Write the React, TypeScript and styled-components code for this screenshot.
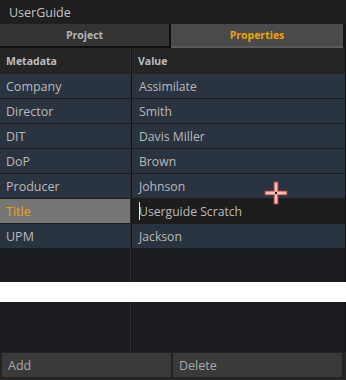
import React from 'react';
import styled, { createGlobalStyle, css } from 'styled-components';

const GlobalStyle = createGlobalStyle`
    html, body {
        margin: 0;
        padding: 0;
        background: #1e1e1e;
    }
    body {
        font-family: 'Open Sans', 'Noto Sans', sans-serif;
        font-size: 12px;
    }
`;

const rows = [
    { key: 'Company', value: 'Assimilate' },
    { key: 'Director', value: 'Smith' },
    { key: 'DIT', value: 'Davis Miller' },
    { key: 'DoP', value: 'Brown' },
    { key: 'Producer', value: 'Johnson' },
    { key: 'Title', value: 'Userguide Scratch', selected: true },
    { key: 'UPM', value: 'Jackson' },
];

const App = (): JSX.Element => {
    return (
        <S_Panel>
            <GlobalStyle />
            <S_TitleBar>UserGuide</S_TitleBar>
            <S_Tabs>
                <S_Tab>Project</S_Tab>
                <S_Tab active>Properties</S_Tab>
            </S_Tabs>
            <S_Table>
                <S_HeadCell>Metadata</S_HeadCell>
                <S_Divider />
                <S_HeadCell>Value</S_HeadCell>
                {rows.map((row) => (
                    <React.Fragment key={row.key}>
                        <S_KeyCell selected={row.selected}>{row.key}</S_KeyCell>
                        <S_Divider />
                        <S_ValueCell editing={row.selected}>
                            {row.selected && <S_Caret />}
                            {row.value}
                        </S_ValueCell>
                    </React.Fragment>
                ))}
                <S_Filler h={33} />
                <S_Divider />
                <S_Filler h={33} />
            </S_Table>
            <S_Gap />
            <S_Table>
                <S_Filler h={50} />
                <S_Divider />
                <S_Filler h={50} />
            </S_Table>
            <S_Buttons>
                <S_Button>Add</S_Button>
                <S_Button>Delete</S_Button>
            </S_Buttons>
            <S_Pointer width="24" height="24" viewBox="0 0 24 24">
                <rect x="10" y="1" width="4" height="22" fill="#f29a9a" stroke="#b04040" strokeWidth="0.8" />
                <rect x="1" y="10" width="22" height="4" fill="#f29a9a" stroke="#b04040" strokeWidth="0.8" />
                <rect x="10.4" y="10.4" width="3.2" height="3.2" fill="#f29a9a" />
                <line x1="12" y1="2" x2="12" y2="22" stroke="#fde0e0" strokeWidth="1" />
                <line x1="2" y1="12" x2="22" y2="12" stroke="#fde0e0" strokeWidth="1" />
                <rect x="11" y="11" width="2" height="2" fill="#1a1a1a" />
            </S_Pointer>
        </S_Panel>
    );
};

export default App;

const S_Panel = styled.div`
    position: relative;
    width: 346px;
    height: 380px;
    background: #1e1e1e;
    color: #b9b9b9;
    overflow: hidden;
`;

const S_TitleBar = styled.div`
    height: 24px;
    display: flex;
    align-items: center;
    padding-left: 9px;
    font-size: 12.5px;
    color: #c4c4c4;
    background: #1f1f1f;
`;

const S_Tabs = styled.div`
    display: grid;
    grid-template-columns: 171px 172px;
    height: 24px;
    background: #161616;
`;

const S_Tab = styled.div<{ active?: boolean }>`
    display: flex;
    align-items: center;
    justify-content: center;
    font-weight: 700;
    font-size: 10.5px;
    ${(props) => {
        if (props.active) {
            return css`
                background: #4a4a4a;
                color: #f0a30a;
                border-bottom: 2px solid #5a5a5a;
            `;
        } else {
            return css`
                background: #333333;
                color: #b4b4b4;
                border-right: 2px solid #0f0f0f;
                border-bottom: 2px solid #0f0f0f;
            `;
        }
    }}
`;

const S_Table = styled.div`
    display: grid;
    grid-template-columns: 130px 2px 213px;
    border-right: 1px solid #111214;
`;

const S_Divider = styled.div`
    background: #141517;
    border-left: 1px solid #2e2e30;
`;

const S_HeadCell = styled.div`
    height: 26px;
    display: flex;
    align-items: center;
    padding-left: 6px;
    font-weight: 700;
    font-size: 10.5px;
    color: #bdbdbd;
    background: #252525;
`;

const S_KeyCell = styled.div<{ selected?: boolean }>`
    height: 24px;
    display: flex;
    align-items: center;
    padding-left: 6px;
    font-size: 12.5px;
    border-bottom: 1px solid #1b1e22;
    ${(props) => {
        if (props.selected) {
            return css`
                background: #767676;
                color: #f0a30a;
            `;
        } else {
            return css`
                background: #2a3440;
                color: #b9b9b9;
            `;
        }
    }}
`;

const S_ValueCell = styled.div<{ editing?: boolean }>`
    position: relative;
    height: 24px;
    display: flex;
    align-items: center;
    padding-left: 7px;
    font-size: 12.2px;
    border-bottom: 1px solid #1b1e22;
    color: #b9b9b9;
    background: ${(props) => (props.editing ? '#1d1d1d' : '#2a3440')};
`;

const S_Caret = styled.span`
    position: absolute;
    left: 7px;
    top: 3px;
    width: 1px;
    height: 18px;
    background: #e8e8e8;
`;

const S_Filler = styled.div<{ h: number }>`
    height: ${(props) => props.h}px;
    background: #1b1c20;
`;

const S_Gap = styled.div`
    height: 20px;
    background: #ffffff;
`;

const S_Buttons = styled.div`
    display: grid;
    grid-template-columns: 169px 169px;
    gap: 2px;
    padding: 1px 4px 3px 2px;
    background: #242424;
`;

const S_Button = styled.div`
    height: 24px;
    display: flex;
    align-items: center;
    padding-left: 6px;
    font-size: 12.5px;
    color: #a9a9a9;
    background: #3a3a3a;
`;

const S_Pointer = styled.svg`
    position: absolute;
    left: 264px;
    top: 181px;
`;
